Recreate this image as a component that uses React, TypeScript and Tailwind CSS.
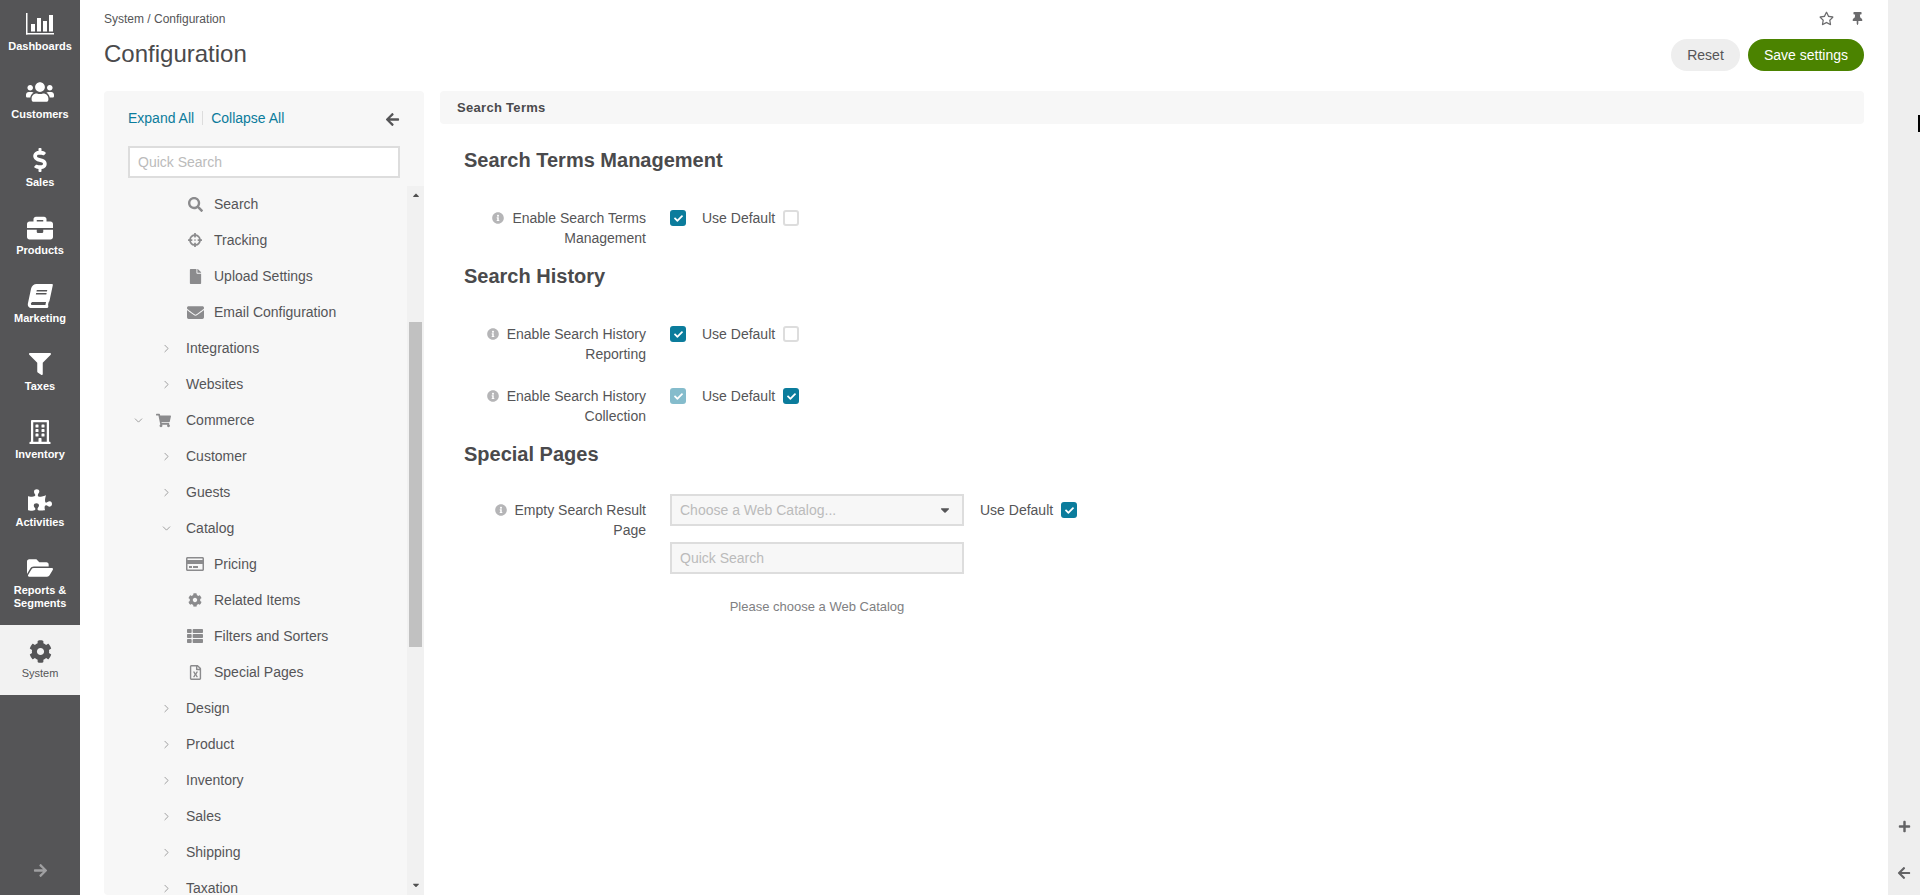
import React from "react";
import {
  FaUsers, FaDollarSign, FaBriefcase, FaBook, FaFilter, FaRegBuilding, FaPuzzlePiece, FaFolderOpen, FaCog,
  FaArrowRight, FaArrowLeft, FaSearch, FaCrosshairs, FaFile, FaEnvelope, FaShoppingCart, FaRegCreditCard,
  FaThList, FaRegFileExcel, FaInfoCircle, FaRegStar, FaThumbtack, FaPlus, FaCheck, FaCaretDown, FaCaretUp,
} from "react-icons/fa";
import { ChevronRight, ChevronDown } from "lucide-react";

function Bars() {
  return (
    <svg width="28" height="22" viewBox="0 0 28 22" fill="white">
      <rect x="0" y="0" width="1.5" height="21.5" />
      <rect x="0" y="20" width="28" height="1.5" />
      <rect x="5" y="11" width="4" height="7.5" />
      <rect x="11" y="5" width="4" height="13.5" />
      <rect x="17" y="8" width="4" height="10.5" />
      <rect x="23" y="2" width="4" height="16.5" />
    </svg>
  );
}

const nav: { label: React.ReactNode; icon: React.ReactNode; active?: boolean }[] = [
  { label: "Dashboards", icon: <Bars /> },
  { label: "Customers", icon: <FaUsers size={28} /> },
  { label: "Sales", icon: <FaDollarSign size={24} /> },
  { label: "Products", icon: <FaBriefcase size={26} /> },
  { label: "Marketing", icon: <FaBook size={24} className="-skew-x-12" /> },
  { label: "Taxes", icon: <FaFilter size={22} /> },
  { label: "Inventory", icon: <FaRegBuilding size={24} /> },
  { label: "Activities", icon: <FaPuzzlePiece size={24} /> },
  { label: <>Reports &amp;<br />Segments</>, icon: <FaFolderOpen size={26} /> },
  { label: "System", icon: <FaCog size={23} />, active: true },
];

type Row = { label: string; level: 1 | 2 | 3; open?: boolean; icon?: React.ReactNode };
const ic = "text-[#8b8b8d]";
const rows: Row[] = [
  { label: "Search", level: 3, icon: <FaSearch size={15} className={ic} /> },
  { label: "Tracking", level: 3, icon: <FaCrosshairs size={14} className={ic} /> },
  { label: "Upload Settings", level: 3, icon: <FaFile size={15} className={ic} /> },
  { label: "Email Configuration", level: 3, icon: <FaEnvelope size={17} className={ic} /> },
  { label: "Integrations", level: 2 },
  { label: "Websites", level: 2 },
  { label: "Commerce", level: 1, open: true },
  { label: "Customer", level: 2 },
  { label: "Guests", level: 2 },
  { label: "Catalog", level: 2, open: true },
  { label: "Pricing", level: 3, icon: <FaRegCreditCard size={18} className={ic} /> },
  { label: "Related Items", level: 3, icon: <FaCog size={14} className={ic} /> },
  { label: "Filters and Sorters", level: 3, icon: <FaThList size={16} className={ic} /> },
  { label: "Special Pages", level: 3, icon: <FaRegFileExcel size={15} className={ic} /> },
  { label: "Design", level: 2 },
  { label: "Product", level: 2 },
  { label: "Inventory", level: 2 },
  { label: "Sales", level: 2 },
  { label: "Shipping", level: 2 },
  { label: "Taxation", level: 2 },
];

function TreeRow({ r }: { r: Row }) {
  const Chev = r.open ? ChevronDown : ChevronRight;
  if (r.level === 3) {
    return (
      <div className="flex h-[36px] items-center text-[14px] text-[#555557]">
        <span className="ml-[76px] flex w-[34px] justify-center pr-[4px]">
          <span className="flex w-[18px] justify-center">{r.icon}</span>
        </span>
        <span>{r.label}</span>
      </div>
    );
  }
  if (r.level === 1) {
    return (
      <div className="flex h-[36px] items-center text-[14px] text-[#555557]">
        <span className="ml-[27px] flex w-[14px] justify-center">
          <Chev size={13} strokeWidth={1.5} className="text-[#8b8b8d]" />
        </span>
        <span className="ml-[9px] flex w-[18px] justify-center">
          <FaShoppingCart size={15} className={ic} />
        </span>
        <span className="ml-[14px]">{r.label}</span>
      </div>
    );
  }
  return (
    <div className="flex h-[36px] items-center text-[14px] text-[#555557]">
      <span className="ml-[55px] flex w-[14px] justify-center">
        <Chev size={13} strokeWidth={1.5} className="text-[#8b8b8d]" />
      </span>
      <span className="ml-[13px]">{r.label}</span>
    </div>
  );
}

function Check({ on, faded }: { on?: boolean; faded?: boolean }) {
  if (!on) return <span className="block h-[16px] w-[16px] shrink-0 rounded-[3px] border-2 border-[#dddddd] bg-white" />;
  return (
    <span className={`flex h-[16px] w-[16px] shrink-0 items-center justify-center rounded-[3px] ${faded ? "bg-[#85bccc]" : "bg-[#0b7c9c]"}`}>
      <FaCheck size={9} className="text-white" />
    </span>
  );
}

function Label({ text }: { text: string }) {
  return (
    <div className="w-[182px] shrink-0 text-right text-[14px] leading-[20px] text-[#555557]">
      <FaInfoCircle size={12} className="mr-[8px] inline-block align-[-1px] text-[#b5b5b7]" />
      {text}
    </div>
  );
}

function Heading({ children, cls }: { children: React.ReactNode; cls: string }) {
  return <h2 className={`text-[20px] font-bold leading-[24px] text-[#4a4a4c] ${cls}`}>{children}</h2>;
}

function CheckRow({ text, main, def, faded, cls }: { text: string; main: boolean; def: boolean; faded?: boolean; cls: string }) {
  return (
    <div className={`flex ${cls}`}>
      <Label text={text} />
      <div className="ml-[24px] mt-[2px] flex h-[16px] items-center">
        <Check on={main} faded={faded} />
        <span className="ml-[16px] text-[14px] text-[#555557]">Use Default</span>
        <span className="ml-[8px]"><Check on={def} /></span>
      </div>
    </div>
  );
}

export default function App() {
  return (
    <div className="flex h-[895px] overflow-hidden bg-white font-['Liberation_Sans',Arial,sans-serif]">
      <aside className="flex w-[80px] shrink-0 flex-col bg-[#555557]">
        {nav.map((n, i) => (
          <div
            key={i}
            className={`flex flex-col items-center pb-[15px] pt-[11px] text-center text-[11px] font-bold leading-[13px] ${
              n.active ? "bg-[#f2f2f2] font-normal text-[#555557]" : "text-white"
            }`}
          >
            <div className={`flex h-[26px] items-center justify-center ${n.active ? "mt-[2px] text-[#555557]" : ""}`}>{n.icon}</div>
            <div className="mt-[3px]">{n.label}</div>
          </div>
        ))}
        <div className="mt-auto flex justify-center pb-[17px] text-[#a0a0a2]">
          <FaArrowRight size={15} />
        </div>
      </aside>

      <main className="flex min-w-0 flex-1 flex-col pl-[24px] pr-[24px]">
        <div className="flex justify-between">
          <div>
            <div className="pt-[11px] text-[12px] leading-[16px] text-[#555557]">System / Configuration</div>
            <h1 className="mt-[13px] text-[24px] font-normal leading-[28px] text-[#4a4a4c]">Configuration</h1>
          </div>
          <div className="flex flex-col items-end">
            <div className="flex items-center gap-[17px] pr-[-1px] pt-[11px] text-[#6b6b6d]">
              <FaRegStar size={15} />
              <FaThumbtack size={13} />
            </div>
            <div className="mt-[13px] flex gap-[8px] text-[14px]">
              <div className="flex h-[32px] w-[69px] items-center justify-center rounded-full bg-[#eeeeee] text-[#555557]">Reset</div>
              <div className="flex h-[32px] w-[116px] items-center justify-center rounded-full bg-[#4b8300] text-white">Save settings</div>
            </div>
          </div>
        </div>

        <div className="mt-[20px] flex min-h-0 flex-1 gap-[16px]">
          <section className="flex w-[320px] shrink-0 flex-col rounded-[4px] bg-[#f7f7f7]">
            <div className="flex items-center justify-between pl-[24px] pr-[24px] pt-[18px]">
              <div className="flex items-center text-[14px] leading-[18px] text-[#0b7c9c]">
                <span>Expand All</span>
                <span className="mx-[8px] h-[14px] w-px bg-[#dddddd]" />
                <span>Collapse All</span>
              </div>
              <FaArrowLeft size={15} className="mt-[2px] text-[#555557]" />
            </div>
            <div className="mx-[24px] mt-[19px] flex h-[32px] items-center border-2 border-[#dddddd] bg-white pl-[8px] text-[14px] text-[#bbbbbb]">
              Quick Search
            </div>
            <div className="mt-[8px] flex min-h-0 flex-1">
              <div className="min-w-0 flex-1 overflow-hidden">
                {rows.map((r) => (
                  <TreeRow key={r.label + r.level} r={r} />
                ))}
              </div>
              <div className="flex w-[17px] shrink-0 flex-col items-center bg-[#f1f1f1]">
                <FaCaretUp size={10} className="mt-[4px] text-[#505050]" />
                <div className="mt-[122px] h-[325px] w-[13px] bg-[#c1c1c1]" />
                <FaCaretDown size={10} className="mb-[5px] mt-auto text-[#505050]" />
              </div>
            </div>
          </section>

          <section className="min-w-0 flex-1">
            <div className="flex h-[33px] items-center rounded-[4px] bg-[#f7f7f7] pl-[17px] text-[13px] font-bold tracking-[0.3px] text-[#4a4a4c]">
              Search Terms
            </div>
            <div className="pl-[24px] text-[#555557]">
              <Heading cls="mt-[24px]">Search Terms Management</Heading>
              <CheckRow cls="mt-[36px]" text="Enable Search Terms Management" main def={false} />
              <Heading cls="mt-[16px]">Search History</Heading>
              <CheckRow cls="mt-[36px]" text="Enable Search History Reporting" main def={false} />
              <CheckRow cls="mt-[22px]" text="Enable Search History Collection" main faded def />
              <Heading cls="mt-[16px]">Special Pages</Heading>
              <div className="mt-[28px] flex">
                <div className="pt-[6px]"><Label text="Empty Search Result Page" /></div>
                <div className="ml-[24px] w-[294px]">
                  <div className="flex h-[32px] items-center justify-between border-2 border-[#dddddd] bg-[#f7f7f7] pl-[8px] pr-[10px] text-[14px] text-[#bbbbbb]">
                    <span>Choose a Web Catalog...</span>
                    <FaCaretDown size={14} className="text-[#555557]" />
                  </div>
                  <div className="mt-[16px] flex h-[32px] items-center border-2 border-[#dddddd] bg-[#f7f7f7] pl-[8px] text-[14px] text-[#bbbbbb]">
                    Quick Search
                  </div>
                  <div className="mt-[24px] text-center text-[13px] leading-[18px] text-[#808082]">Please choose a Web Catalog</div>
                </div>
                <div className="ml-[16px] mt-[8px] flex h-[16px] items-center">
                  <span className="text-[14px] text-[#555557]">Use Default</span>
                  <span className="ml-[8px]"><Check on /></span>
                </div>
              </div>
            </div>
          </section>
        </div>
      </main>

      <aside className="relative flex w-[32px] shrink-0 flex-col items-center justify-end bg-[#eeeeee] pb-[15px] text-[#636365]">
        <FaPlus size={13} />
        <FaArrowLeft size={14} className="mt-[33px]" />
        <span className="absolute right-0 top-[115px] h-[17px] w-[2px] bg-black" />
      </aside>
    </div>
  );
}
